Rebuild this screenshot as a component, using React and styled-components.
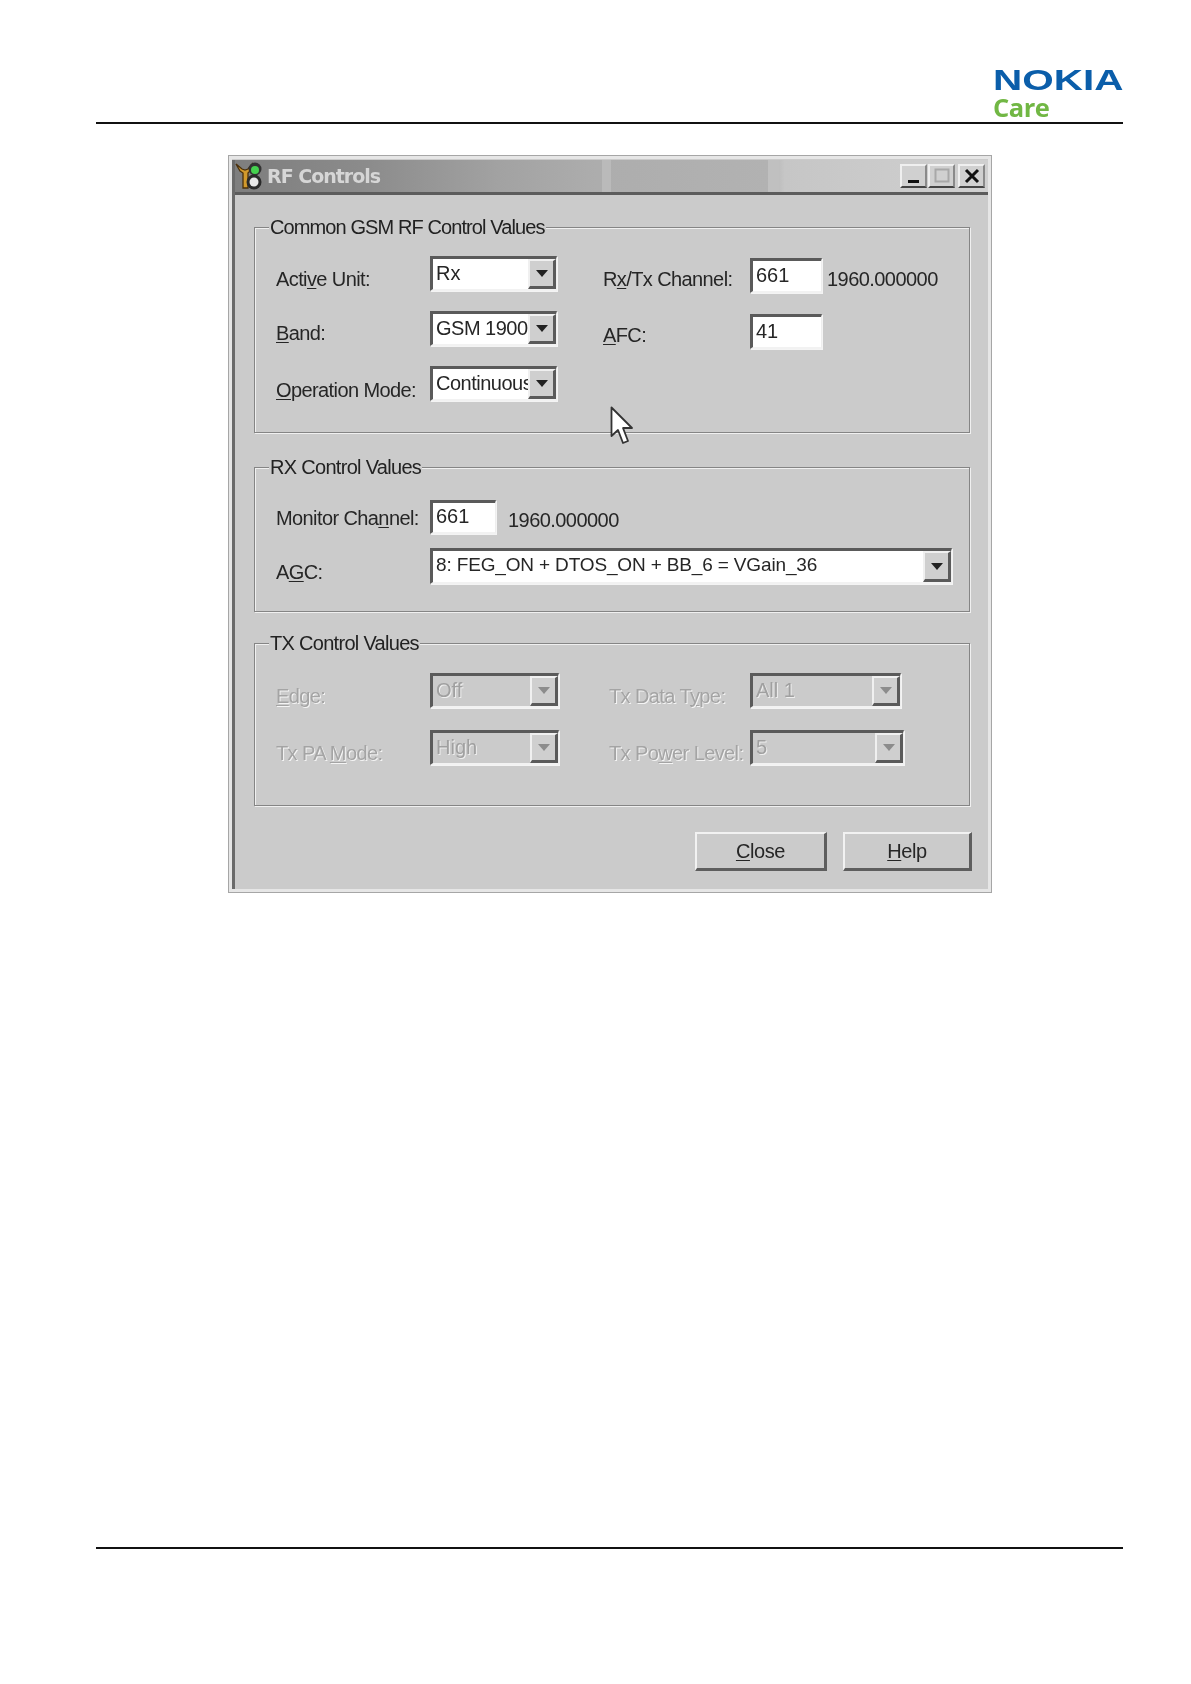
import React from "react";
import styled, { createGlobalStyle } from "styled-components";

const Global = createGlobalStyle`
  html, body { margin: 0; padding: 0; background: #fff; }
  * { box-sizing: border-box; }
`;

const Page = styled.div`
  width: 1191px; height: 1684px;
  padding: 66px 68px 135px 96px;
  display: flex; flex-direction: column;
  font-family: "Liberation Sans", Arial, sans-serif;
`;
const Header = styled.header`
  height: 58px;
  border-bottom: 2px solid #111;
  display: flex; justify-content: flex-end;
`;
const Logo = styled.div`
  width: 130px; display: flex; flex-direction: column; align-items: flex-start;
  filter: blur(0.4px);
`;
const LogoWord = styled.div`
  font: 700 30px/28px "Liberation Sans", Arial, sans-serif;
  color: #0b5eaa;
  transform: scaleX(1.35);
  transform-origin: left center;
  white-space: nowrap;
`;
const LogoCare = styled.div`
  font: 700 25.5px/27px "Open Sans", "Noto Sans", sans-serif;
  color: #71b744;
  letter-spacing: -0.5px;
`;
const Dialog = styled.section`
  position: relative;
  align-self: center;
  width: 764px; height: 738px; margin-top: 31px; margin-left: 1px;
  background: #cbcbcb;
  border: 1px solid #a6a6a6;
  box-shadow: inset 0 0 0 3px #e6e6e6;
  padding: 4px 3px 3px 3px;
  filter: blur(0.6px);
`;
const Inner = styled.div`
  height: 100%;
  border-left: 3px solid #6a6a6a;
  display: flex; flex-direction: column;
`;
const TitleBar = styled.div`
  height: 35px; flex: none;
  border-bottom: 3px solid #5c5c5c;
  display: flex; align-items: center;
  padding: 0 3px 0 0;
  background:
    linear-gradient(90deg, transparent 0 48.8%, #bababa 48.8% 49.9%, transparent 49.9% 70.8%, #c0c0c0 70.8% 72.2%, transparent 72.2% 100%),
    linear-gradient(90deg, #7e7e7e 0%, #8c8c8c 18%, #a2a2a2 35%, #adadad 48%, #b2b2b2 71%, #c6c6c6 73%, #d0d0d0 100%);
`;
const TitleIcon = styled.svg`
  width: 30px; height: 30px; flex: none; margin-left: -1px;
`;
const TitleText = styled.div`
  font: 700 19px/1 "DejaVu Sans", Verdana, sans-serif;
  color: #d6d6d6;
  letter-spacing: -1px;
  margin-left: 3px;
  flex: 1;
`;
const WinButton = styled.div`
  width: 27px; height: 24px; margin-left: ${p => p.$gap}px;
  background: #d0d0d0;
  border-top: 2px solid #efefef; border-left: 2px solid #efefef;
  border-right: 2px solid #8a8a8a; border-bottom: 2px solid #444;
  display: flex; align-items: center; justify-content: center;
`;
const WinGlyph = styled.svg`
  width: 20px; height: 18px; display: block;
`;
const Body = styled.div`
  flex: 1;
  padding: 32px 18px 0 19px;
  display: flex; flex-direction: column;
`;
const Group = styled.div`
  position: relative;
  height: ${p => p.$h}px;
  margin-bottom: ${p => p.$mb}px;
  padding: ${p => p.$pt}px 0 0 21px;
  border: 1px solid #858585;
  box-shadow: 1px 1px 0 #f0f0f0, inset 1px 1px 0 #f0f0f0;
  display: flex;
`;
const Legend = styled.div`
  position: absolute; left: 14px; top: -13px;
  padding: 0 1px;
  background: #cbcbcb;
  font-size: 20px; line-height: 24px;
  letter-spacing: ${p => p.$ls}px;
  color: #222;
  white-space: nowrap;
`;
const Fields = styled.div`
  display: grid;
  grid-template-columns: ${p => p.$cols};
  grid-template-rows: ${p => p.$rows || "none"};
  grid-auto-rows: 35px;
  row-gap: ${p => p.$gap}px;
  padding-top: ${p => p.$top || 0}px;
  margin-left: ${p => p.$left || 0}px;
  align-content: start;
`;
const Label = styled.div`
  font-size: 20px; line-height: 24px;
  letter-spacing: -0.6px;
  align-self: center;
  padding-top: ${p => p.$drop ?? 11}px;
  white-space: nowrap;
  color: ${p => (p.$off ? "#a4a4a4" : "#262626")};
  text-shadow: ${p => (p.$off ? "1px 1px 0 #f4f4f4" : "none")};
`;
const Key = styled.span`
  text-decoration: underline;
  text-underline-offset: 2px;
  text-decoration-thickness: 1px;
`;
const Value = styled.div`
  font-size: 20px; line-height: 24px;
  letter-spacing: -0.55px;
  color: #262626;
  align-self: center;
  white-space: nowrap;
  padding: ${p => p.$drop ?? 6}px 0 0 ${p => p.$left}px;
`;
const Sunken = styled.div`
  height: 100%;
  width: ${p => p.$w}px;
  background: ${p => (p.$off ? "#cbcbcb" : "#fff")};
  border-top: 3px solid #5a5a5a; border-left: 3px solid #5a5a5a;
  border-right: 1px solid #eee; border-bottom: 2px solid #f2f2f2;
  box-shadow: 1px 1px 0 #f4f4f4;
  display: flex; align-items: center;
  padding-left: 3px;
  overflow: hidden;
`;
const Text = styled.div`
  flex: 1; min-width: 0;
  font-size: ${p => p.$fs || 20}px; line-height: 24px;
  letter-spacing: ${p => p.$ls ?? 0}px;
  color: ${p => (p.$off ? "#a0a0a0" : "#262626")};
  text-shadow: ${p => (p.$off ? "1px 1px 0 #eee" : "none")};
  white-space: nowrap; overflow: hidden;
  margin-top: -3px;
`;
const Arrow = styled.div`
  flex: none; width: 28px; height: 100%;
  background: #cfcfcf;
  border-top: 2px solid #f0f0f0; border-left: 2px solid #f0f0f0;
  border-right: 3px solid #5a5a5a; border-bottom: 3px solid #5a5a5a;
  display: flex; align-items: center; justify-content: center;
  &::after {
    content: ""; display: block;
    border-style: solid; border-width: 7px 6px 0 6px;
    border-color: ${p => (p.$off ? "#8c8c8c" : "#222")} transparent transparent transparent;
  }
`;
const Span = styled.div`
  grid-column: 2 / span 2;
`;
const Buttons = styled.div`
  display: flex; justify-content: flex-end; gap: 16px;
  margin-right: -2px;
`;
const PushButton = styled.div`
  width: ${p => p.$w}px; height: 39px;
  background: #cbcbcb;
  border-top: 2px solid #f2f2f2; border-left: 2px solid #f2f2f2;
  border-right: 3px solid #5e5e5e; border-bottom: 3px solid #5e5e5e;
  display: flex; align-items: center; justify-content: center;
  font-size: 20px; letter-spacing: -0.4px; color: #262626;
`;
const Pointer = styled.svg`
  position: absolute; left: 381px; top: 250px;
  width: 26px; height: 40px;
`;
const Footer = styled.footer`
  margin-top: auto;
  border-top: 2px solid #111;
`;

function Combo({ w, children, off, ls, fs }) {
  return (
    <Sunken $w={w} $off={off}>
      <Text $off={off} $ls={ls} $fs={fs}>{children}</Text>
      <Arrow $off={off} />
    </Sunken>
  );
}

function Edit({ w, children }) {
  return (
    <Sunken $w={w}>
      <Text>{children}</Text>
    </Sunken>
  );
}

export default function App() {
  return (
    <Page>
      <Global />
      <Header>
        <Logo>
          <LogoWord>NOKIA</LogoWord>
          <LogoCare>Care</LogoCare>
        </Logo>
      </Header>

      <Dialog>
        <Inner>
          <TitleBar>
            <TitleIcon viewBox="0 0 30 30">
              <path d="M2 3 L6 10 L9 12 L9 27 L14 27 L14 12 L17 9 L19 2 L14 8 L11 9 L8 8 Z" fill="#d29a2c" stroke="#4a300c" strokeWidth="1.3" />
              <circle cx="21" cy="8" r="6.5" fill="#333" />
              <circle cx="21" cy="9" r="4" fill="#45d24f" />
              <circle cx="20" cy="21" r="7.5" fill="#2a2a2a" />
              <circle cx="20" cy="21" r="4.5" fill="#e8e8e8" />
            </TitleIcon>
            <TitleText>RF Controls</TitleText>
            <WinButton $gap={3}>
              <WinGlyph viewBox="0 0 20 18"><rect x="4" y="13" width="11" height="3" fill="#111" /></WinGlyph>
            </WinButton>
            <WinButton $gap={1}>
              <WinGlyph viewBox="0 0 20 18"><rect x="3.5" y="2.5" width="13" height="12" fill="none" stroke="#a8a8a8" strokeWidth="2" /></WinGlyph>
            </WinButton>
            <WinButton $gap={3}>
              <WinGlyph viewBox="0 0 20 18"><path d="M4 3 L16 15 M16 3 L4 15" stroke="#111" strokeWidth="3" /></WinGlyph>
            </WinButton>
          </TitleBar>

          <Body>
            <Group $h={206} $mb={34} $pt={28}>
              <Legend $ls={-0.9}>Common GSM RF Control Values</Legend>
              <Fields $cols="154px 128px" $gap={20}>
                <Label>Acti<Key>v</Key>e Unit:</Label>
                <Combo w={127}>Rx</Combo>
                <Label $drop={9}><Key>B</Key>and:</Label>
                <Combo w={127} ls={-0.5}>GSM 1900</Combo>
                <Label $drop={13}><Key>O</Key>peration Mode:</Label>
                <Combo w={127} ls={-0.5}>Continuous</Combo>
              </Fields>
              <Fields $cols="147px 73px auto" $gap={21} $top={2} $left={45}>
                <Label $drop={6}>R<Key>x</Key>/Tx Channel:</Label>
                <Edit w={72}>661</Edit>
                <Value $left={4}>1960.000000</Value>
                <Label $drop={7}><Key>A</Key>FC:</Label>
                <Edit w={72}>41</Edit>
              </Fields>
            </Group>

            <Group $h={145} $mb={31} $pt={32}>
              <Legend $ls={-0.7}>RX Control Values</Legend>
              <Fields $cols="154px 67px 302px" $rows="34px 36px" $gap={14}>
                <Label $drop={2}>Monitor Cha<Key>n</Key>nel:</Label>
                <Edit w={66}>661</Edit>
                <Value $left={11} $drop={5}>1960.000000</Value>
                <Label $drop={12}>A<Key>G</Key>C:</Label>
                <Span>
                  <Combo w={522} fs={19} ls={-0.15}>8: FEG_ON + DTOS_ON + BB_6 = VGain_36</Combo>
                </Span>
              </Fields>
            </Group>

            <Group $h={163} $mb={26} $pt={29}>
              <Legend $ls={-0.7}>TX Control Values</Legend>
              <Fields $cols="154px 130px" $gap={22}>
                <Label $off $drop={10}><Key>E</Key>dge:</Label>
                <Combo w={129} off>Off</Combo>
                <Label $off $drop={10}>Tx PA <Key>M</Key>ode:</Label>
                <Combo w={129} off>High</Combo>
              </Fields>
              <Fields $cols="141px auto" $gap={22} $left={49}>
                <Label $off $drop={10}>Tx Data T<Key>y</Key>pe:</Label>
                <Combo w={151} off>All 1</Combo>
                <Label $off $drop={10}>Tx Po<Key>w</Key>er Level:</Label>
                <Combo w={154} off>5</Combo>
              </Fields>
            </Group>

            <Buttons>
              <PushButton $w={132}><span><Key>C</Key>lose</span></PushButton>
              <PushButton $w={129}><span><Key>H</Key>elp</span></PushButton>
            </Buttons>
          </Body>
        </Inner>
        <Pointer viewBox="0 0 26 40">
          <path d="M1.5 1.5 L1.5 30 L8 24 L13 37 L18 35 L13 22 L22 22 Z" fill="#fff" stroke="#333" strokeWidth="1.8" strokeLinejoin="round" />
        </Pointer>
      </Dialog>

      <Footer />
    </Page>
  );
}
